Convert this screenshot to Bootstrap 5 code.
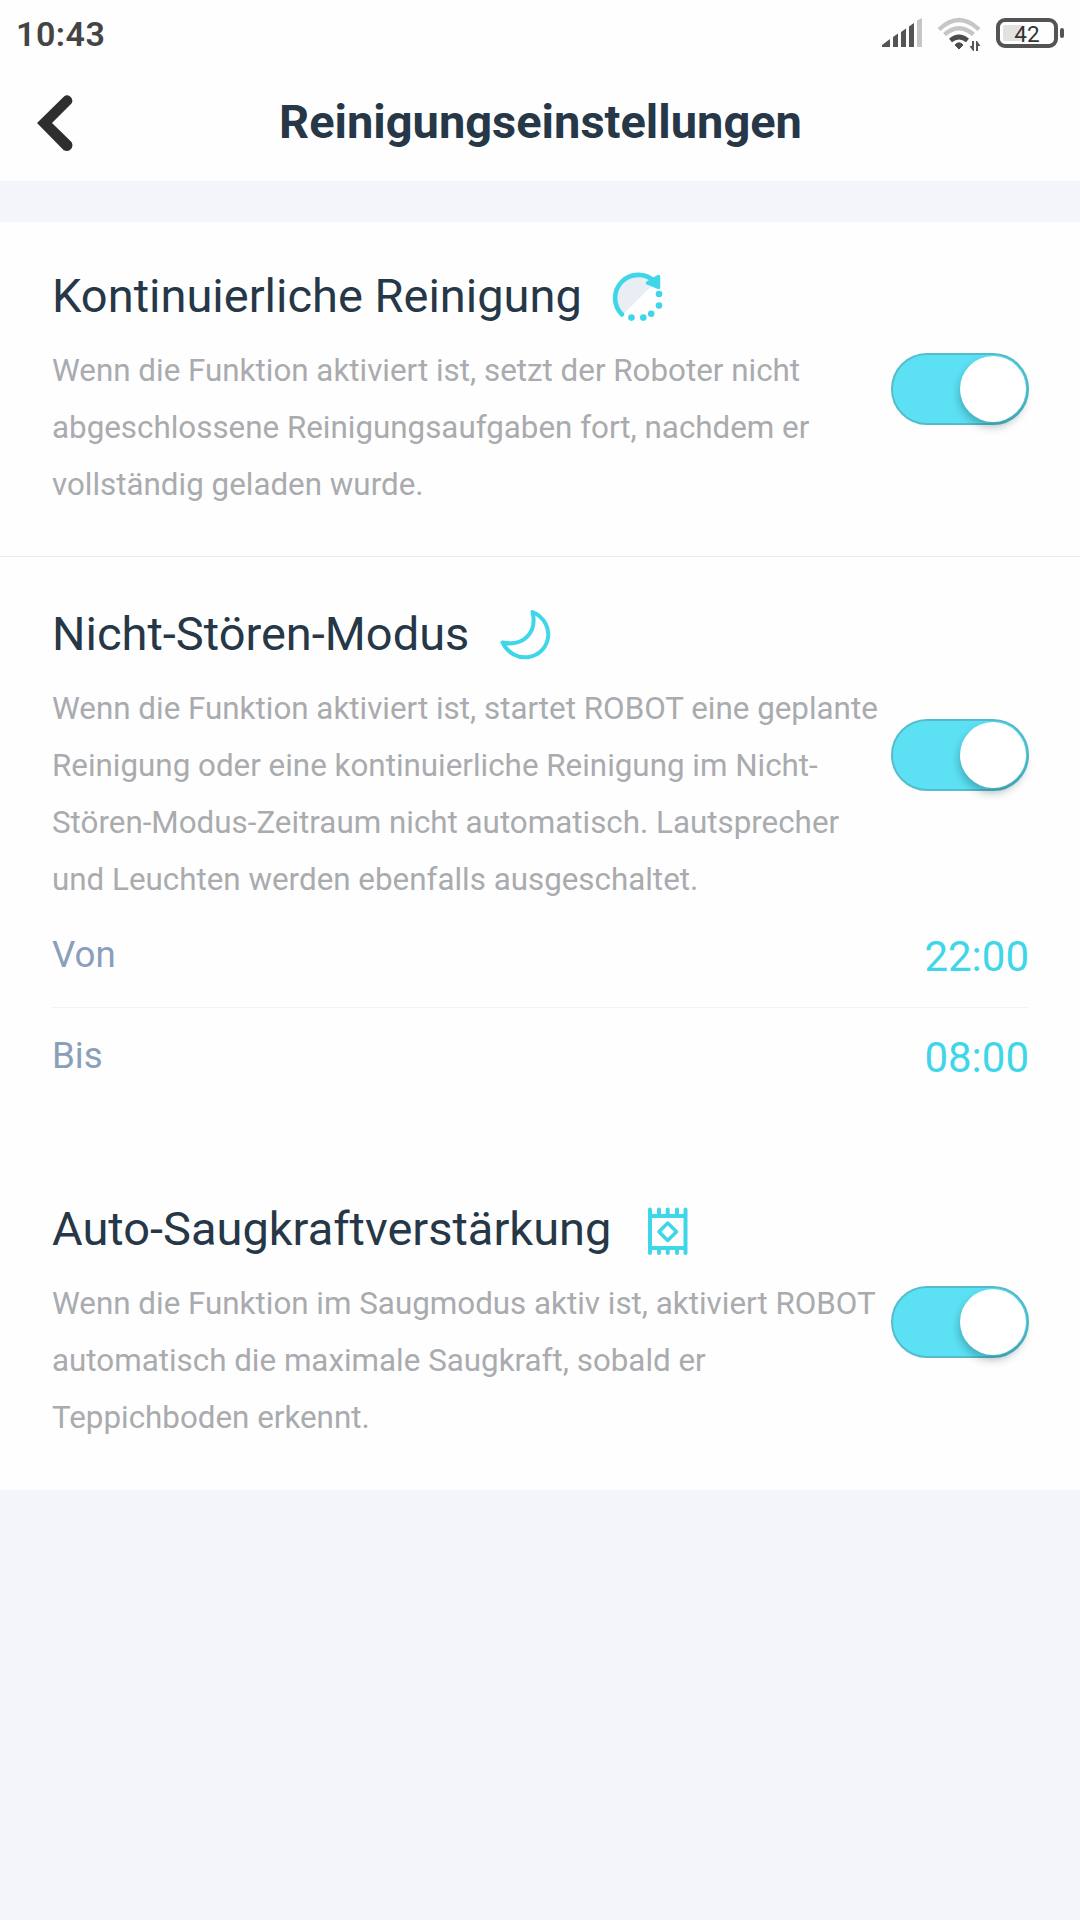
<!DOCTYPE html>
<html lang="de">
<head>
<meta charset="utf-8">
<meta name="viewport" content="width=device-width, initial-scale=1">
<title>Reinigungseinstellungen</title>
<link href="https://cdn.jsdelivr.net/npm/bootstrap@5.3.0/dist/css/bootstrap.min.css" rel="stylesheet">
<style>
body{font-family:Roboto,"Liberation Sans",sans-serif;background:#f4f5fa;color:#263747;min-height:1920px}
svg{display:block;flex:none}
.panel{background:#fefefe}
.statusbar{height:66px;padding:0 16px}
.statusbar svg{margin-top:2px}
.clock{font-size:34px;font-weight:600;letter-spacing:.5px;color:#444;line-height:66px;margin-top:2px}
.appbar{height:115px;padding:0 36px 0 37px}
.appbar svg{margin-top:-2px}
.appbar h1{font-size:47px;font-weight:700;line-height:60px;color:#263747;margin-top:-4px}
.spacer{width:36px}
.gap-band{height:41px}
.setting{padding:44px 51px 43px 52px}
.setting.with-line{border-bottom:1px solid #ededef}
.setting.quiet{padding-top:47px;padding-bottom:46px}
.setting.boost{padding-bottom:44px}
.setting h2{font-size:47px;font-weight:400;line-height:60px;color:#263747}
.head-row{height:60px;margin-bottom:16px}
.icon-repeat{margin-left:28px}
.icon-moon{margin-left:29px}
.icon-carpet{margin-left:36px;margin-top:3px}
.desc{font-size:31.35px;line-height:57px;color:#a9abae;white-space:nowrap}
.setting .toggle{width:138px;height:72px;border:2px solid #55bccb;background-color:#5ce1f4;border-radius:36px;padding:1px;margin:0}
.setting .toggle.raised{margin-bottom:2px}
.knob{width:66px;height:66px;border-radius:50%;background:#fff;box-shadow:-1px 5px 8px rgba(0,50,60,.3)}
.text-col{width:839px}
.time-row{height:99px}
.time-row + .time-row{border-top:1px solid #f2f2f4;height:102px}
.time-label{font-size:36.7px;line-height:44px;color:#8a9fba;margin-top:-6px}
.time-value{font-size:42px;line-height:50px;color:#40d6e9;margin-top:-2px}
</style>
</head>
<body>
<div class="panel">
  <div class="statusbar d-flex align-items-center justify-content-between">
    <div class="clock">10:43</div>
    <svg width="184" height="40" viewBox="880 14 184 40">
      <path d="M882 47v-2l8-6v8zM893 47V37l5-3.500V47zM901 47V32l5-3.500V47zM909 47V26.500l5-3.500V47z" fill="#545454"/>
      <path d="M917 47V20.500l5-2.500V47z" fill="#c6c6c6"/>
      <g fill="none" stroke-width="4.300">
        <path d="M939 29.500Q959 10.500 979 29.500M944.500 34.500Q959 22 973.500 34.500" stroke="#c6c6c6"/>
        <path d="M950.500 40.500Q959 33.500 967.500 40.500" stroke="#4c4c4c" stroke-width="4.600"/>
      </g>
      <path d="M955 45q4-4.500 8 0l-4 4z" fill="#4c4c4c" stroke="#4c4c4c" stroke-width="1"/>
      <path d="M969.500 46h2.500v-5h2v10h-1zM976 51v-10h1l3.500 5h-2.500v5z" fill="#555"/>
      <rect x="998" y="20" width="58" height="26" rx="7" fill="#fefefe" stroke="#545454" stroke-width="4"/>
      <rect x="1003" y="25" width="21" height="16" rx="2" fill="#e2e2e2"/>
      <rect x="1060" y="28" width="4" height="10" rx="2" fill="#545454"/>
      <text x="1027" y="41.500" text-anchor="middle" font-family="Roboto" font-size="22.500" fill="#333">42</text>
    </svg>
  </div>
  <header class="appbar d-flex align-items-center justify-content-between">
    <svg width="36" height="58" viewBox="37 94 36 58"><path d="M64 96.500Q66.500 94.500 69.500 96Q74 99 71.500 103.500L52 123 71.500 142Q74 147 70 150Q67 152 63.500 150L37 123z" fill="#2e2e2e"/></svg>
    <h1 class="mb-0 text-center">Reinigungseinstellungen</h1>
    <div class="spacer"></div>
  </header>
</div>
<div class="gap-band"></div>
<main class="panel">
  <section class="setting with-line">
    <div class="d-flex align-items-center">
      <div class="text-col">
        <div class="head-row d-flex align-items-center">
          <h2 class="mb-0">Kontinuierliche Reinigung</h2>
          <svg class="icon-repeat" width="54" height="54" viewBox="610.500 270 54 54">
            <path d="M623 316A23.500 23.500 0 0 1 651 279L653 286z" fill="#e9eef4"/>
            <path d="M622.500 315.500A23 23 0 0 1 655 282.500" fill="none" stroke="#40d6e9" stroke-width="4.600" stroke-linecap="round"/>
            <path d="M648 284L659 277.500V288.500z" fill="#3fd6ea" stroke="#3fd6ea" stroke-width="3.500" stroke-linejoin="round"/>
            <g fill="#40d6e9"><circle cx="659.500" cy="295" r="3.300"/><circle cx="659.500" cy="306.500" r="3.300"/><circle cx="651.700" cy="314.700" r="3.300"/><circle cx="643.800" cy="318.600" r="3.300"/><circle cx="632" cy="318.600" r="3.300"/></g>
          </svg>
        </div>
        <p class="desc mb-0">Wenn die Funktion aktiviert ist, setzt der Roboter nicht<br>abgeschlossene Reinigungsaufgaben fort, nachdem er<br>vollständig geladen wurde.</p>
      </div>
      <div class="toggle raised d-flex justify-content-end flex-shrink-0" role="switch" aria-checked="true"><div class="knob"></div></div>
    </div>
  </section>
  <section class="setting quiet">
    <div class="d-flex align-items-center">
      <div class="text-col">
        <div class="head-row d-flex align-items-center">
          <h2 class="mb-0">Nicht-Stören-Modus</h2>
          <svg class="icon-moon" width="54" height="54" viewBox="498 607 54 54">
            <path d="M532.500 612C544.500 617 550.500 629 547.500 640C542.500 660 514 665 502.500 642.500C524 647 537.500 632 532.500 612z" fill="none" stroke="#40d6e9" stroke-width="4" stroke-linejoin="round"/>
          </svg>
        </div>
        <p class="desc mb-0">Wenn die Funktion aktiviert ist, startet ROBOT eine geplante<br>Reinigung oder eine kontinuierliche Reinigung im Nicht-<br>Stören-Modus-Zeitraum nicht automatisch. Lautsprecher<br>und Leuchten werden ebenfalls ausgeschaltet.</p>
      </div>
      <div class="toggle raised d-flex justify-content-end flex-shrink-0" role="switch" aria-checked="true"><div class="knob"></div></div>
    </div>
    <div class="time-row d-flex align-items-center justify-content-between"><span class="time-label">Von</span><span class="time-value">22:00</span></div>
    <div class="time-row d-flex align-items-center justify-content-between"><span class="time-label">Bis</span><span class="time-value">08:00</span></div>
  </section>
  <section class="setting boost">
    <div class="d-flex align-items-center">
      <div class="text-col">
        <div class="head-row d-flex align-items-center">
          <h2 class="mb-0">Auto-Saugkraftverstärkung</h2>
          <svg class="icon-carpet" width="42" height="50" viewBox="647 1206 42 50">
            <path d="M650 1209.500V1253M685.500 1209.500V1253M650 1216H685.500M650 1248H685.500M659 1209.500V1216M667.700 1209.500V1216M677 1209.500V1216M659 1248V1253M667.700 1248V1253M677 1248V1253" fill="none" stroke="#40d6e9" stroke-width="4" stroke-linecap="round"/>
            <path d="M667.700 1223L676.500 1231.700 667.700 1240.500 659 1231.700z" fill="none" stroke="#40d6e9" stroke-width="3.500" stroke-linejoin="round"/>
          </svg>
        </div>
        <p class="desc mb-0">Wenn die Funktion im Saugmodus aktiv ist, aktiviert ROBOT<br>automatisch die maximale Saugkraft, sobald er<br>Teppichboden erkennt.</p>
      </div>
      <div class="toggle raised d-flex justify-content-end flex-shrink-0" role="switch" aria-checked="true"><div class="knob"></div></div>
    </div>
  </section>
</main>
<script src="https://cdn.jsdelivr.net/npm/bootstrap@5.3.0/dist/js/bootstrap.bundle.min.js"></script>
</body>
</html>
